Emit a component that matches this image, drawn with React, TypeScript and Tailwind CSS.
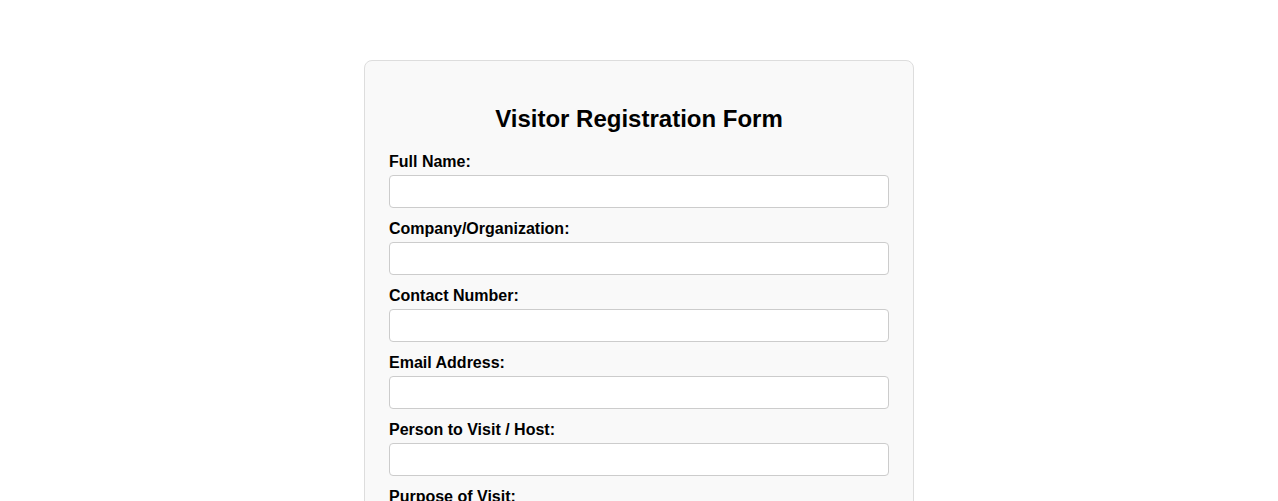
import React from 'react';

const fields = [
  { label: 'Full Name:', type: 'text' },
  { label: 'Company/Organization:', type: 'text' },
  { label: 'Contact Number:', type: 'tel' },
  { label: 'Email Address:', type: 'email' },
  { label: 'Person to Visit / Host:', type: 'text' },
  { label: 'Purpose of Visit:', type: 'text' },
  { label: 'Date of Visit:', type: 'date' },
  { label: 'Time In:', type: 'time' },
];

export default function App() {
  return (
    <div className="min-h-screen bg-white pt-[60px] pb-10 font-['Liberation_Sans',Arial,sans-serif] text-black">
      <div className="mx-auto w-[550px] rounded-[8px] border border-[#dddddd] bg-[#f9f9f9] p-6">
        <h2 className="mt-5 mb-5 text-center text-[24px] font-bold leading-[28px]">Visitor Registration Form</h2>
        <form className="flex flex-col gap-3">
          {fields.map(f => (
            <div key={f.label} className="flex flex-col gap-1">
              <label className="text-[16px] font-bold leading-[18px]">{f.label}</label>
              <input
                type={f.type}
                className="h-[33px] w-full rounded-[4px] border border-[#cccccc] bg-white px-2 text-[14px] outline-none"
              />
            </div>
          ))}
        </form>
      </div>
    </div>
  );
}
